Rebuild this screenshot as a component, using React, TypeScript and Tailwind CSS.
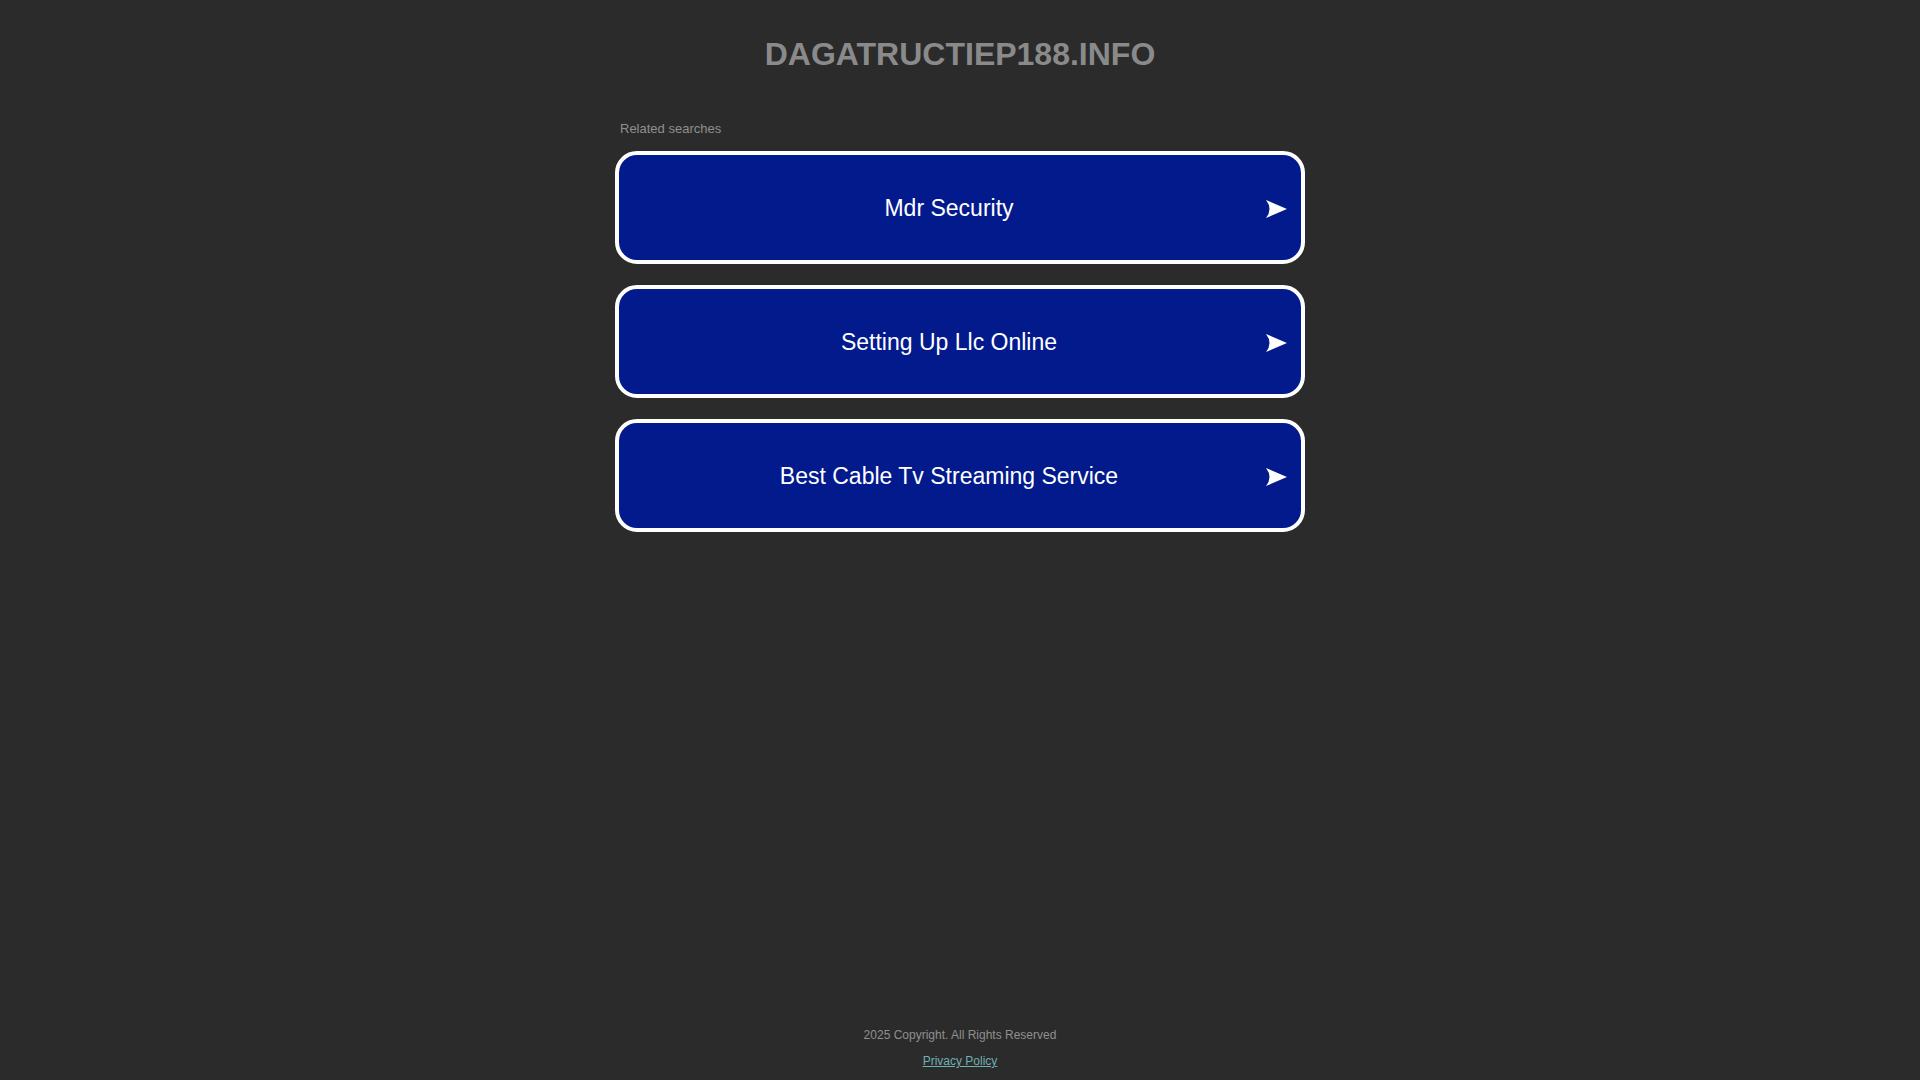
import React from "react";

const items = ["Mdr Security", "Setting Up Llc Online", "Best Cable Tv Streaming Service"];

function Arrow() {
  return (
    <svg width="21" height="18" viewBox="0 0 21 18" className="absolute right-[14px] top-[calc(50%+1px)] -translate-y-1/2" aria-hidden="true">
      <path d="M0 0 L21 9 L0 18 Q7 9 0 0 Z" fill="#ffffff" />
    </svg>
  );
}

export default function App() {
  return (
    <div className="min-h-screen bg-[#2b2b2b] flex flex-col" style={{ fontFamily: '"Liberation Sans", Arial, sans-serif' }}>
      <h1 className="text-center text-[32px] font-bold leading-[40px] pt-[34px] text-[#8a8a8a]">DAGATRUCTIEP188.INFO</h1>
      <div className="w-[690px] mx-auto mt-[47px]">
        <div className="pl-[5px] text-[13px] leading-[16px] text-[#8f8f8f]">Related searches</div>
        <div className="mt-[14px] flex flex-col gap-[21px]">
          {items.map((t) => (
            <a
              key={t}
              href="#"
              className="relative flex h-[113px] items-center justify-center rounded-[22px] border-4 border-white bg-[#021a8c] pr-[22px] pt-[2px] text-[23px] text-white"
            >
              <span>{t}</span>
              <Arrow />
            </a>
          ))}
        </div>
      </div>
      <footer className="mt-auto pb-[11px] flex flex-col items-center gap-[10px] text-[12px] leading-[16px]">
        <div className="text-[#8f8f8f]">2025 Copyright. All Rights Reserved</div>
        <a href="#" className="text-[#6fb0b0] underline">Privacy Policy</a>
      </footer>
    </div>
  );
}
